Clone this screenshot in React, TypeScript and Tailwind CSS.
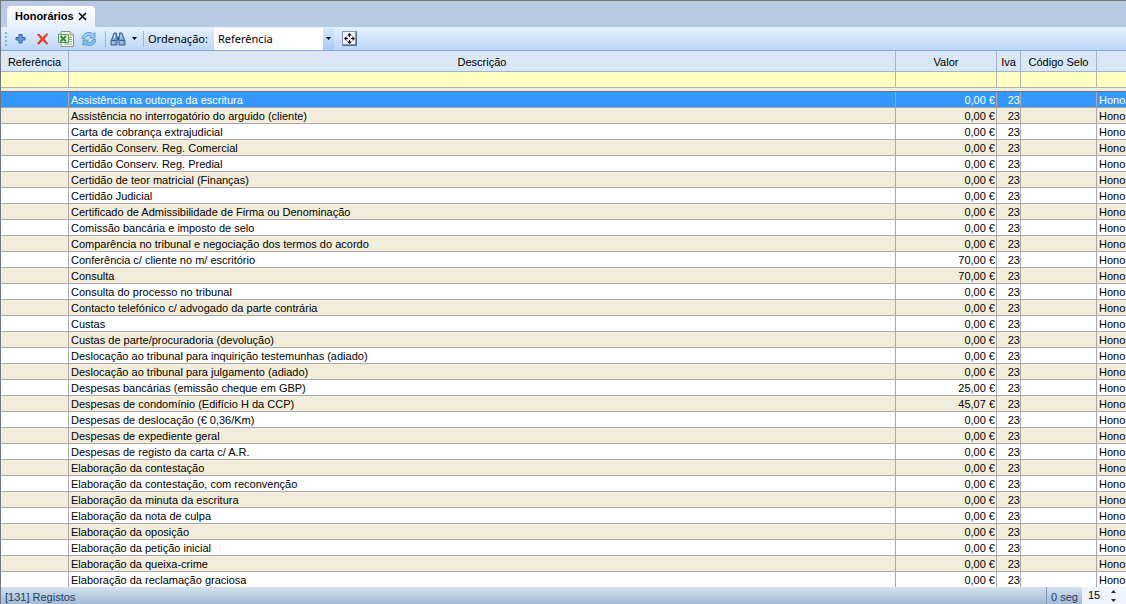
import React from "react";

type Fee = {
  description: string;
  value?: string;
};

const fees: Fee[] = [
  { description: "Assistência na outorga da escritura" },
  { description: "Assistência no interrogatório do arguido (cliente)" },
  { description: "Carta de cobrança extrajudicial" },
  { description: "Certidão Conserv. Reg. Comercial" },
  { description: "Certidão Conserv. Reg. Predial" },
  { description: "Certidão de teor matricial (Finanças)" },
  { description: "Certidão Judicial" },
  { description: "Certificado de Admissibilidade de Firma ou Denominação" },
  { description: "Comissão bancária e imposto de selo" },
  { description: "Comparência no tribunal e negociação dos termos do acordo" },
  { description: "Conferência c/ cliente no m/ escritório", value: "70,00 €" },
  { description: "Consulta", value: "70,00 €" },
  { description: "Consulta do processo no tribunal" },
  { description: "Contacto telefónico c/ advogado da parte contrária" },
  { description: "Custas" },
  { description: "Custas de parte/procuradoria (devolução)" },
  { description: "Deslocação ao tribunal para inquirição testemunhas (adiado)" },
  { description: "Deslocação ao tribunal para julgamento (adiado)" },
  { description: "Despesas bancárias (emissão cheque em GBP)", value: "25,00 €" },
  { description: "Despesas de condomínio (Edifício H da CCP)", value: "45,07 €" },
  { description: "Despesas de deslocação (€ 0,36/Km)" },
  { description: "Despesas de expediente geral" },
  { description: "Despesas de registo da carta c/ A.R." },
  { description: "Elaboração da contestação" },
  { description: "Elaboração da contestação, com reconvenção" },
  { description: "Elaboração da minuta da escritura" },
  { description: "Elaboração da nota de culpa" },
  { description: "Elaboração da oposição" },
  { description: "Elaboração da petição inicial" },
  { description: "Elaboração da queixa-crime" },
  { description: "Elaboração da reclamação graciosa" },
];

const headers = ["Referência", "Descrição", "Valor", "Iva", "Código Selo", ""];

const AddIcon = () => (
  <svg width="16" height="16" viewBox="0 0 16 16">
    <path d="M6 3.500h3v3h3v2.500H9v3H6V9H3V6.500h3z" fill="#6a9ce0" stroke="#2f5faa" />
  </svg>
);

const DeleteIcon = () => (
  <svg width="16" height="16" viewBox="0 0 16 16">
    <path
      d="M2.500 3.500 4 3 7.500 6.500 12 2.500l1 .7L9 8l4 4.500-1.200.8L7.500 9.500 3.800 13.500 2.300 12.500 6 8z"
      fill="#f0391f"
      stroke="#df2a14"
      strokeWidth=".5"
    />
  </svg>
);

const ExcelIcon = () => (
  <svg width="18" height="16" viewBox="0 0 18 16">
    <path d="M4 .5h9l3.500 3.500v11.500H4z" fill="#f7f8f3" stroke="#8d9483" />
    <path d="M13 .5V4h3.500" fill="#dfe3d6" stroke="#8d9483" />
    <path d="M12 6.500h3M12 8.500h3M12 10.500h3M7 13h8" stroke="#84b27c" />
    <path d="M1.500 3.500h10v8h-10z" fill="#e3f1dc" stroke="#5c9a56" />
    <path d="m3.500 5 5.500 5.500M9 5l-5.500 5.500" stroke="#3c8440" strokeWidth="1.800" />
  </svg>
);

const RefreshIcon = () => (
  <svg width="16" height="16" viewBox="0 0 16 16">
    <path
      d="M1 7.500C1.500 3.500 4.500 1.500 8 1.500c2 0 3.300.6 4.300 1.600L14 1.500V7H8.500l1.800-1.800C8 3.800 5.500 4.300 4 7.500z"
      fill="#9bcff0"
      stroke="#4a90c6"
      strokeWidth=".8"
    />
    <path
      d="M15 8.500c-.5 4-3.500 6-7 6-2 0-3.300-.6-4.300-1.600L2 14.500V9h5.500l-1.800 1.800C8 12.200 10.500 11.700 12 8.500z"
      fill="#82bfea"
      stroke="#4a90c6"
      strokeWidth=".8"
    />
  </svg>
);

const BinocularsIcon = () => (
  <svg width="16" height="16" viewBox="0 0 16 16">
    <path d="M4 2h2.500v3L7 6.500V14H1v-4l2-5z" fill="#7fa3d2" stroke="#3a629b" />
    <path d="M9.500 2H12l1 3 2 5v4H9V6.500L9.500 5z" fill="#7fa3d2" stroke="#3a629b" />
    <path d="M7 5.500h2v4H7z" fill="#3a629b" />
    <path d="M3 10.500V13M11 10.500V13M4.500 3.500v4M11 3.500v4" stroke="#dce9f9" />
    <path d="M1 9.500h5.500M9.500 9.500H15" stroke="#3a629b" />
  </svg>
);

const ExpandIcon = () => (
  <svg width="15" height="15" viewBox="0 0 15 15">
    <path d="M.5.5h14v14H.5z" fill="#f2f7fd" stroke="#29405f" strokeDasharray="1 1" />
    <path d="M14 1v13H1" fill="none" stroke="#29405f" />
    <path d="M7.500 2 10 4.500H5zM7.500 13 10 10.500H5zM2 7.500 4.500 5v5zM13 7.500 10.500 5v5z" fill="#111" />
    <path d="M7.500 4v2M7.500 9v2M4 7.500h2M9 7.500h2" stroke="#111" />
  </svg>
);

const Caret = () => (
  <svg width="5" height="3" viewBox="0 0 5 3">
    <path d="M0 0h5L2.500 3z" fill="#000" />
  </svg>
);

const Separator = () => <div className="h-4 w-px bg-[#8fb5e6]"></div>;

const Toolbar = () => {
  return (
    <div className="flex h-6 shrink-0 items-center border-b border-[#80a8d8] bg-linear-to-b from-[#e6f1fe] to-[#bcd7fa] pl-1 font-['Noto_Sans',sans-serif]">
      <div className="mr-1.5 flex flex-col gap-0.5">
        {[0, 1, 2, 3].map((dot) => (
          <div key={dot} className="size-0.5 bg-[#85aadb]"></div>
        ))}
      </div>
      <div className="flex items-center gap-1.5">
        <button aria-label="Adicionar">
          <AddIcon />
        </button>
        <button aria-label="Eliminar">
          <DeleteIcon />
        </button>
        <button aria-label="Exportar para Excel">
          <ExcelIcon />
        </button>
        <button aria-label="Atualizar">
          <RefreshIcon />
        </button>
      </div>
      <div className="ml-2 flex items-center gap-1">
        <Separator />
        <button aria-label="Procurar" className="flex items-center gap-1.5 pr-0.5">
          <BinocularsIcon />
          <Caret />
        </button>
        <Separator />
      </div>
      <label htmlFor="order" className="ml-1 w-[66px]">
        Ordenação:
      </label>
      <div className="relative">
        <select id="order" className="block h-[22px] w-30 appearance-none bg-white pl-1 leading-[22px]">
          <option>Referência</option>
        </select>
        <div className="pointer-events-none absolute inset-y-0 right-0 flex w-[11px] items-center justify-center bg-linear-to-b from-[#d8e8fc] to-[#a9caf3]">
          <Caret />
        </div>
      </div>
      <button aria-label="Expandir" className="ml-2">
        <ExpandIcon />
      </button>
    </div>
  );
};

const FeeTable = () => {
  return (
    <table className="w-full table-fixed border-separate border-spacing-0 whitespace-nowrap leading-[14px]">
      <colgroup>
        <col className="w-[68px]" />
        <col />
        <col className="w-[101px]" />
        <col className="w-6" />
        <col className="w-[76px]" />
        <col className="w-[29px]" />
      </colgroup>
      <thead>
        <tr className="h-[21px] bg-[#dae7f4]">
          {headers.map((header) => (
            <th key={header} className="border-r border-b border-[#9eb6ce] p-0 pt-px text-center font-normal last:border-r-0">
              {header}
            </th>
          ))}
        </tr>
        <tr className="h-4 bg-[#ffffc0]">
          {headers.map((header) => (
            <td key={header} className="border-r border-b border-[#b5b5a5] p-0 last:border-r-0"></td>
          ))}
        </tr>
        <tr className="h-1">
          <td colSpan={6} className="border-b border-[#77736f] bg-[#ececec] p-0"></td>
        </tr>
      </thead>
      <tbody>
        {fees.map((fee, index) => (
          <tr
            key={fee.description}
            className={
              index === 0
                ? "h-4 bg-[#3399ff] text-white"
                : "h-4 odd:bg-white even:bg-[#f1eedb]"
            }
          >
            <td className="border-r border-b border-[#a9a9a9] p-0"></td>
            <td className="overflow-hidden border-r border-b border-[#a9a9a9] p-0 pt-px pl-0.5">{fee.description}</td>
            <td className="border-r border-b border-[#a9a9a9] p-0 pt-px pr-px text-right">{fee.value ?? "0,00 €"}</td>
            <td className="border-r border-b border-[#a9a9a9] p-0 pt-px text-right">23</td>
            <td className="border-r border-b border-[#a9a9a9] p-0"></td>
            <td className="overflow-hidden border-b border-[#a9a9a9] p-0 pt-px pl-0.5">Honorários</td>
          </tr>
        ))}
      </tbody>
    </table>
  );
};

const StatusBar = () => {
  return (
    <footer className="flex h-[17px] shrink-0 items-end bg-linear-to-b from-[#d5e2f0] to-[#a3bad6] leading-[13px] text-[#24405f]">
      <div className="grow pl-1">[131] Registos</div>
      <div className="flex h-full items-end border-l border-[#8298b5] px-1">0 seg</div>
      <div className="flex h-full w-11 items-center bg-[#eef5fd] text-black">
        <input aria-label="Segundos" defaultValue="15" className="w-7 bg-transparent pl-1.5 outline-none" />
        <svg width="7" height="12" viewBox="0 0 7 12">
          <path d="M1 3h5L3.500 0zM1 9h5l-2.500 3z" fill="#1b2b3d" />
        </svg>
      </div>
    </footer>
  );
};

const App = () => {
  return (
    <div className="flex h-screen flex-col overflow-hidden border-t border-l border-[#6f7883] bg-white font-['Liberation_Sans',Arial,sans-serif] text-[11px] leading-[15px] text-black">
      <div className="flex h-[26px] shrink-0 items-end bg-[#b9cae3] pl-1.5">
        <div className="flex h-[21px] items-center gap-1 rounded-t bg-linear-to-b from-white to-[#e6f1fe] px-2 font-bold">
          Honorários
          <button aria-label="Fechar">
            <svg width="9" height="9" viewBox="0 0 9 9">
              <path d="m1 1 7 7M8 1 1 8" stroke="#000" strokeWidth="1.500" />
            </svg>
          </button>
        </div>
      </div>
      <Toolbar />
      <main className="min-h-0 grow overflow-hidden">
        <FeeTable />
      </main>
      <StatusBar />
    </div>
  );
};

export default App;
